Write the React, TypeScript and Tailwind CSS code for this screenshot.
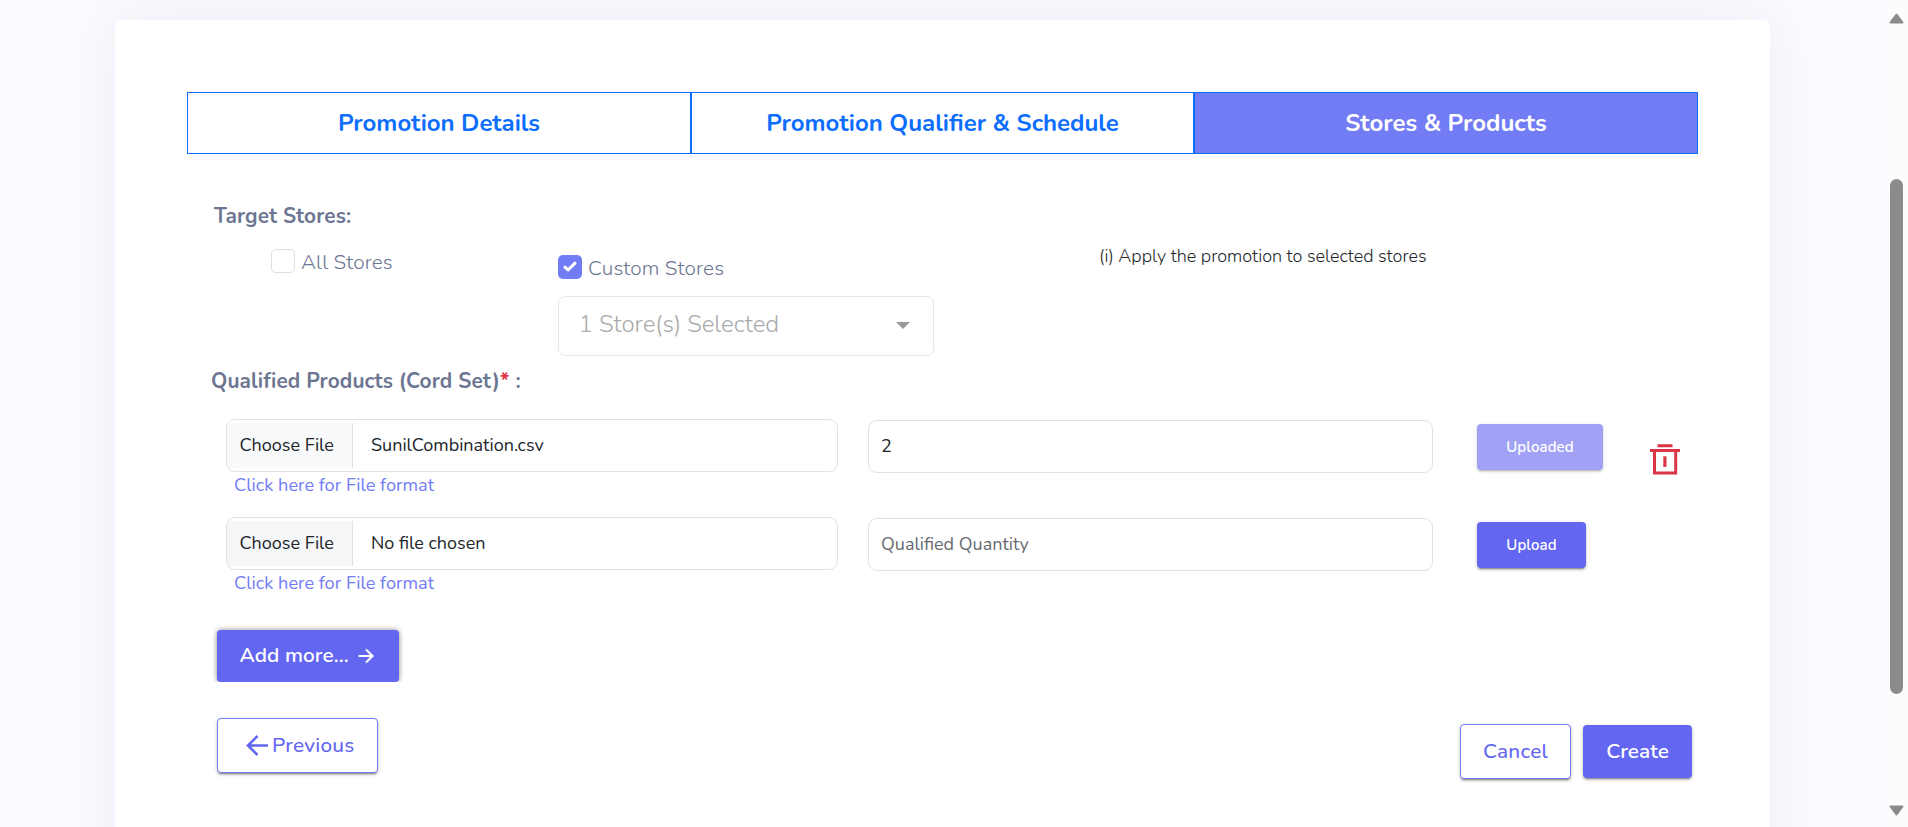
import type { ReactNode } from 'react';

function Tab({ children, width, active = false }: { children: ReactNode; width: string; active?: boolean }) {
  return (
    <button
      className={`flex h-[62px] items-center justify-center border border-[#0d6efd] pb-px text-2xl font-bold ${width} ${
        active ? 'bg-[#727cf5] text-white' : 'bg-white text-[#0d6efd]'
      }`}
    >
      {children}
    </button>
  );
}

function Check({ checked = false, label }: { checked?: boolean; label: string }) {
  return (
    <label className="flex h-6 items-center text-[20.8px] leading-6 font-light tracking-[0.1px] text-[#6c7693]">
      {checked ? (
        <span className="flex size-6 items-center justify-center rounded-[5px] bg-[#727cf5]">
          <svg width="14" height="12" viewBox="0 0 14 12" fill="none">
            <path d="M2 6.2 5 9 12 2.2" stroke="#fff" strokeWidth="3" strokeLinecap="round" strokeLinejoin="round" />
          </svg>
        </span>
      ) : (
        <span className="size-6 rounded-[5px] border border-[#dee0e6] bg-white" />
      )}
      <span className="ml-1.5 pt-px">{label}</span>
    </label>
  );
}

const raised = 'shadow-[0_3px_1px_-2px_rgba(0,0,0,0.24),0_2px_2px_0_rgba(0,0,0,0.18),0_1px_5px_0_rgba(0,0,0,0.14)]';

function FileRow({
  file,
  quantity,
  done = false,
}: {
  file: string;
  quantity?: string;
  done?: boolean;
}) {
  return (
    <div className="flex h-[98px] items-start">
      <div className="w-[612px]">
        <div className="flex h-[53px] items-center overflow-hidden rounded-[9px] border border-[#dee2e6] text-lg">
          <span
            className={`flex h-[45px] w-[126px] items-center border-r border-[#dee2e6] pb-[2px] pl-[12.5px] text-[#212529] ${
              done ? 'bg-[#f8f9fa]' : 'bg-[#f4f6f8]'
            }`}
          >
            Choose File
          </span>
          <span className="pb-[2px] pl-[18px] text-[#212529]">{file}</span>
        </div>
        <a className="ml-2 block text-[18.2px] leading-[27px] text-[#727cf5]">Click here for File format</a>
      </div>
      <div className="mt-px ml-[30px] flex h-[53px] w-[565px] items-center rounded-[9px] border border-[#dee2e6] pb-px pl-3 text-lg">
        {quantity ? (
          <span className="text-[#212529]">{quantity}</span>
        ) : (
          <span className="text-[#666a6f]">Qualified Quantity</span>
        )}
      </div>
      <button
        className={`mt-[5px] ml-11 flex h-[46px] items-center justify-center rounded bg-[#6366f1] text-[15px] font-semibold tracking-[0.1px] text-white ${
          done ? 'w-[126px] opacity-60' : 'w-[109px]'
        } ${raised}`}
      >
        {done ? 'Uploaded' : 'Upload'}
      </button>
      {done && (
        <svg className="mt-[25px] ml-[47px]" width="30" height="31" viewBox="0 0 30 31" fill="none" stroke="#dc3545">
          <path d="M7.5 1.8h15M0 6.4h30" strokeWidth="3" />
          <path d="M4.5 6.5v22.6h21.2V6.5" strokeWidth="3" />
          <path d="M14.9 12.3v10.6" strokeWidth="3.2" />
        </svg>
      )}
    </div>
  );
}

export default function App() {
  return (
    <div className="flex h-[827px] w-full justify-between overflow-hidden bg-[#fafbff] font-['Nunito','Lato',sans-serif]">
      <main className="mt-5 ml-[115px] h-[1000px] w-[1655px] shrink-0 rounded-lg bg-white px-[72px] pt-[72px] shadow-[0_0_50px_rgba(30,40,70,0.065)]">
        <div className="flex w-[1511px]">
          <Tab width="w-[504px]">Promotion Details</Tab>
          <Tab width="w-[503px]">Promotion Qualifier &amp; Schedule</Tab>
          <Tab width="w-[504px]" active>
            Stores &amp; Products
          </Tab>
        </div>

        <h2 className="mt-[47px] ml-[27px] text-[20.8px] leading-[30px] font-bold tracking-[0.12px] text-[#6c7693]">
          Target Stores:
        </h2>

        <section className="flex h-[125px] items-start">
          <div className="mt-[18px] ml-[84px] w-[287px]">
            <Check label="All Stores" />
          </div>
          <div className="mt-6 w-[376px]">
            <Check checked label="Custom Stores" />
            <div className="mt-[17px] flex h-[60px] items-center justify-between rounded-[7px] border border-[#e7e8ea] pr-[23px] pb-1 pl-[19.5px] text-2xl font-light text-[#aaaaaa]">
              <span>1 Store(s) Selected</span>
              <svg className="mt-[3px]" width="14" height="7" viewBox="0 0 14 7">
                <path d="M0 0h14L7 7z" fill="#999" />
              </svg>
            </div>
          </div>
          <p className="mt-3 ml-[165px] text-lg leading-[27px] font-light text-[#212529]">
            (i) Apply the promotion to selected stores
          </p>
        </section>

        <h2 className="mt-[10px] ml-6 text-[20.8px] leading-[30px] font-bold tracking-[0.12px] text-[#6c7693]">
          Qualified Products (Cord Set)<span className="text-[#dc3545]">*</span> :
        </h2>

        <div className="mt-[23px] ml-[39px]">
          <FileRow file="SunilCombination.csv" quantity="2" done />
          <FileRow file="No file chosen" />
        </div>

        <div className="ml-6 h-[67px] overflow-hidden pt-[15px] pl-1.5">
          <button className="flex h-[52px] w-[182px] items-center rounded bg-[#6366f1] pb-px pl-[22.5px] text-[20.8px] font-semibold tracking-[0.05px] text-white shadow-[0_0_4px_1px_rgba(0,0,0,0.35)]">
            Add more...
            <svg className="ml-[9px]" width="16" height="16" viewBox="0 0 16 16" fill="none" stroke="#fff" strokeWidth="2.1">
              <path d="M.5 8h14M8 1.5 14.5 8 8 14.5" />
            </svg>
          </button>
        </div>

        <div className="mt-9 ml-[30px] flex w-[1475px] items-start">
          <button
            className={`flex h-[55px] w-[161px] items-center rounded border border-[#727cf5] bg-white pl-[28px] text-[20.8px] font-medium tracking-[0.25px] text-[#6366f1] ${raised}`}
          >
            <svg width="22" height="21" viewBox="0 0 22 21" fill="none" stroke="#6366f1" strokeWidth="2.6">
              <path d="M22 10.5H2M11.5 1 2 10.5 11.5 20" />
            </svg>
            <span className="ml-1">Previous</span>
          </button>
          <button
            className={`mt-1.5 ml-auto flex h-[55px] w-[111px] items-center justify-center rounded border border-[#727cf5] bg-white text-[20.8px] font-medium tracking-[0.25px] text-[#6366f1] ${raised}`}
          >
            Cancel
          </button>
          <button
            className={`mt-[7px] ml-3 flex h-[53px] w-[109px] items-center justify-center rounded bg-[#6366f1] text-[20.8px] font-semibold text-white ${raised}`}
          >
            Create
          </button>
        </div>
      </main>

      <aside className="flex h-[827px] w-[23px] flex-col items-center bg-[#fcfcfc]">
        <svg className="mt-[13px] shrink-0" width="15" height="11" viewBox="0 0 15 11">
          <path d="M7.5 1.5 13.5 9.5H1.5z" fill="#8b8b8b" stroke="#8b8b8b" strokeWidth="2" strokeLinejoin="round" />
        </svg>
        <div className="mt-[155px] h-[515px] w-[13px] shrink-0 rounded-full bg-[#8b8b8b]" />
        <svg className="mt-[111px] shrink-0" width="15" height="11" viewBox="0 0 15 11">
          <path d="M7.5 9.5 13.5 1.5H1.5z" fill="#8b8b8b" stroke="#8b8b8b" strokeWidth="2" strokeLinejoin="round" />
        </svg>
      </aside>
    </div>
  );
}
